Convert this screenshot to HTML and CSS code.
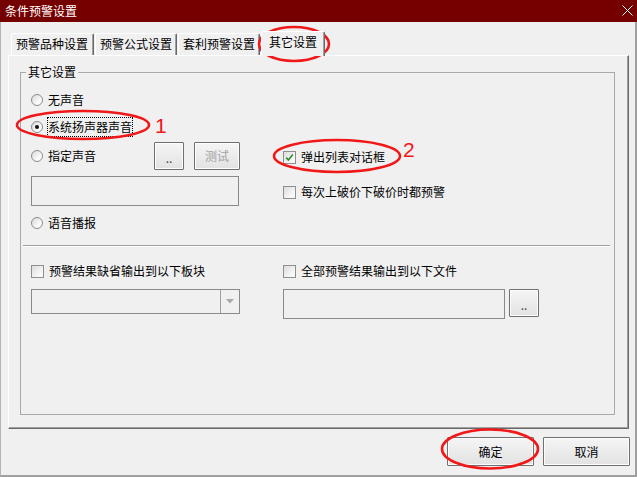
FILE: index.html
```html
<!DOCTYPE html>
<html lang="zh-CN">
<head>
    <meta charset="UTF-8">
    <title>条件预警设置</title>
    <link rel="stylesheet" href="styles.css">
</head>
<body>
    <div class="window">
        <div class="titlebar">
            <span class="title">条件预警设置</span>
            <svg class="close" width="11" height="11" viewBox="0 0 11 11">
                <path d="M0.5 0.5L10.5 10.5M10.5 0.5L0.5 10.5" stroke="#fff" stroke-width="1"/>
            </svg>
        </div>
        <div class="frame">
            <div class="tabs">
                <div class="tab first">预警品种设置</div>
                <div class="tab">预警公式设置</div>
                <div class="tab">套利预警设置</div>
                <div class="tab active">其它设置</div>
            </div>
            <div class="panel">
                <fieldset class="group">
                    <legend>其它设置</legend>
                    <div class="group-body">
                        <div class="top">
                            <div class="col-left">
                                <div class="opt r1"><span class="radio"></span>无声音</div>
                                <div class="opt r2"><span class="radio on"></span><span class="focus">系统扬声器声音</span></div>
                                <div class="opt r3">
                                    <span class="radio"></span><span>指定声音</span>
                                    <button class="btn browse">..</button>
                                    <button class="btn test" disabled>测试</button>
                                </div>
                                <div class="edit sound-file"></div>
                                <div class="opt r4"><span class="radio"></span>语音播报</div>
                            </div>
                            <div class="col-right">
                                <div class="opt c1">
                                    <span class="check">
                                        <svg width="11" height="11" viewBox="0 0 11 11"><path d="M2.2 5.6L4.4 8.1L8.8 2.6" fill="none" stroke="#2d8f2d" stroke-width="1.6"/></svg>
                                    </span>弹出列表对话框
                                </div>
                                <div class="opt c2"><span class="check"></span>每次上破价下破价时都预警</div>
                            </div>
                        </div>
                        <div class="sep"></div>
                        <div class="bottom">
                            <div class="col-left">
                                <div class="opt"><span class="check"></span>预警结果缺省输出到以下板块</div>
                                <div class="combo">
                                    <span class="combo-btn">
                                        <svg width="8" height="5" viewBox="0 0 8 5"><path d="M0 0H8L4 4.5Z" fill="#a8a8a8"/></svg>
                                    </span>
                                </div>
                            </div>
                            <div class="col-right">
                                <div class="opt"><span class="check"></span>全部预警结果输出到以下文件</div>
                                <div class="file-row">
                                    <div class="edit out-file"></div>
                                    <button class="btn browse">..</button>
                                </div>
                            </div>
                        </div>
                    </div>
                </fieldset>
            </div>
            <div class="footer">
                <button class="btn action">确定</button>
                <button class="btn action">取消</button>
            </div>
        </div>

        <!-- red pen marks drawn on top -->
        <svg class="marks" width="637" height="477" viewBox="0 0 637 477">
            <g fill="none" stroke="#f01818" stroke-width="2.6">
                <ellipse cx="294" cy="44" rx="35" ry="17"/>
                <ellipse cx="83" cy="125" rx="66" ry="14"/>
                <ellipse cx="337" cy="156" rx="63" ry="16"/>
                <ellipse cx="490" cy="449" rx="48" ry="19.5"/>
            </g>
            <text x="155" y="133" class="num">1</text>
            <text x="403" y="157" class="num">2</text>
        </svg>
    </div>
</body>
</html>
```

FILE: styles.css
```css
body {
    margin: 0;
    font-family: "Noto Sans CJK SC", "Microsoft YaHei", sans-serif;
    font-size: 12px;
    color: #000;
    background: #f0f0f0;
}
.window {
    position: relative;
    width: 637px;
    height: 477px;
    display: flex;
    flex-direction: column;
    background: #f0f0f0;
}
.titlebar {
    height: 22px;
    background: #750000;
    display: flex;
    align-items: center;
    justify-content: space-between;
    padding: 0 5px;
}
.title {
    color: #fff;
    line-height: 22px;
}
.close {
    margin-top: -2px;
    margin-right: -1px;
}
.frame {
    flex: 1;
    display: flex;
    flex-direction: column;
    border-left: 1px solid #b4b4b4;
    border-right: 2px solid #a0a0a0;
    border-bottom: 2px solid #a0a0a0;
}

/* tab strip */
.tabs {
    display: flex;
    align-items: flex-end;
    height: 24px;
    margin: 9px 0 0 10px;
}
.tab {
    box-sizing: border-box;
    height: 22px;
    line-height: 19px;
    padding: 0 4px;
    margin-right: 1px;
    border-top: 1px solid #fff;
    border-left: 1px solid #fff;
    border-right: 1px solid #696969;
    border-radius: 2px 2px 0 0;
    box-shadow: inset -1px 0 #a0a0a0;
    white-space: nowrap;
}
.tab.first {
    padding-right: 5px;
}
.tab.active {
    position: relative;
    z-index: 1;
    height: 25px;
    margin-bottom: -1px;
    padding: 0 7px;
    background: #f0f0f0;
}
.panel {
    box-sizing: border-box;
    width: 621px;
    height: 374px;
    margin-left: 7px;
    display: flex;
    border-top: 1px solid #fff;
    border-left: 1px solid #fff;
    border-right: 1px solid #696969;
    border-bottom: 1px solid #696969;
    box-shadow: inset -1px -1px #a0a0a0;
}

/* group box */
.group {
    flex: 1;
    min-width: 0;
    margin: 8px 13px 13px 11px;
    padding: 0;
    border: 1px solid #a9a9a9;
}
.group legend {
    margin-left: 5px;
    padding: 0 2px;
    line-height: 16px;
}
.group-body {
    padding: 0 0 0 10px;
}
.top, .bottom {
    display: flex;
}
.col-left {
    width: 252px;
    display: flex;
    flex-direction: column;
}
.col-right {
    flex: 1;
    display: flex;
    flex-direction: column;
}
.opt {
    display: flex;
    align-items: center;
    height: 20px;
    line-height: 18px;
    white-space: nowrap;
}
.r1 { margin-top: 10px; }
.r2 { margin-top: 7px; }
.r3 { margin-top: 5px; height: 28px; }
.r4 { margin-top: 7px; }
.c1 { margin-top: 67px; }
.c2 { margin-top: 15px; }

.radio {
    box-sizing: border-box;
    width: 12px;
    height: 12px;
    margin-right: 5px;
    border: 1px solid #8c8c8c;
    border-radius: 50%;
    background: linear-gradient(135deg, #d9d9d9, #fbfbfb 70%);
    display: flex;
    align-items: center;
    justify-content: center;
}
.radio.on::after {
    content: "";
    width: 4px;
    height: 4px;
    border-radius: 50%;
    background: #111;
}
.focus {
    margin-left: -1px;
    border: 1px dotted #000;
}
.check {
    box-sizing: border-box;
    width: 13px;
    height: 13px;
    margin-right: 5px;
    border: 1px solid #8e8f8f;
    background: linear-gradient(135deg, #dcdcdc, #f8f8f8 75%);
    display: flex;
    align-items: center;
    justify-content: center;
}

.btn {
    box-sizing: border-box;
    font: inherit;
    color: #000;
    padding: 0;
    border: 1px solid #707070;
    border-radius: 1px;
    background: linear-gradient(#f5f5f5, #e2e2e2);
    box-shadow: inset 0 0 0 1px #fcfcfc;
}
.btn.browse {
    width: 30px;
    height: 28px;
    color: #444;
    padding-top: 3px;
}
.r3 .browse {
    margin-left: 58px;
}
.btn.test {
    width: 46px;
    height: 28px;
    margin-left: 10px;
    color: #a2a2a2;
}
.edit {
    box-sizing: border-box;
    border: 1px solid #8a8a8a;
    background: #f0f0f0;
}
.sound-file {
    width: 208px;
    height: 30px;
    margin-top: 6px;
}
.sep {
    margin: 12px 4px 0 -8px;
    border-top: 1px solid #a0a0a0;
    border-bottom: 1px solid #fff;
}
.bottom .opt {
    margin-top: 14px;
}
.combo {
    box-sizing: border-box;
    width: 209px;
    height: 25px;
    margin-top: 8px;
    border: 1px solid #8a8a8a;
    display: flex;
    justify-content: flex-end;
}
.combo-btn {
    width: 18px;
    border-left: 1px solid #a0a0a0;
    display: flex;
    align-items: center;
    justify-content: center;
}
.file-row {
    display: flex;
    align-items: flex-start;
    margin-top: 8px;
}
.out-file {
    width: 222px;
    height: 30px;
}
.file-row .browse {
    margin-left: 4px;
}

/* dialog buttons */
.footer {
    display: flex;
    justify-content: flex-end;
    gap: 9px;
    margin: 8px 5px 0 0;
}
.btn.action {
    width: 87px;
    height: 29px;
}

.marks {
    position: absolute;
    left: 0;
    top: 0;
    pointer-events: none;
}
.num {
    font-family: "Liberation Sans", Arial, sans-serif;
    font-size: 21px;
    fill: #f01818;
}
```
